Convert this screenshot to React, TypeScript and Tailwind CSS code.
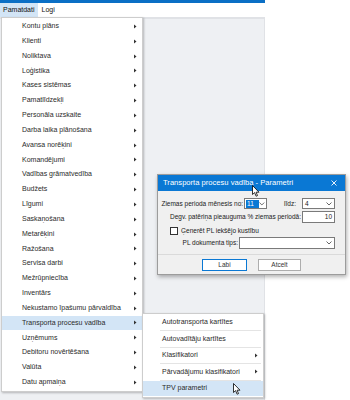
import type { ReactNode } from "react";

const MENU_ITEMS = [
  "Kontu plāns",
  "Klienti",
  "Noliktava",
  "Loģistika",
  "Kases sistēmas",
  "Pamatlīdzekļi",
  "Personāla uzskaite",
  "Darba laika plānošana",
  "Avansa norēķini",
  "Komandējumi",
  "Vadības grāmatvedība",
  "Budžets",
  "Līgumi",
  "Saskaņošana",
  "Metarēķini",
  "Ražošana",
  "Servisa darbi",
  "Mežrūpniecība",
  "Inventārs",
  "Nekustamo īpašumu pārvaldība",
  "Transporta procesu vadība",
  "Uzņēmums",
  "Debitoru novērtēšana",
  "Valūta",
  "Datu apmaiņa",
];

const SUB_ITEMS = [
  { label: "Autotransporta kartītes", arrow: false },
  { label: "Autovadītāju kartītes", arrow: false },
  { label: "Klasifikatori", arrow: true },
  { label: "Pārvadājumu klasifikatori", arrow: true },
  { label: "TPV parametri", arrow: false },
];

function Arrow() {
  return (
    <svg width="3" height="5" viewBox="0 0 3 5" aria-hidden="true">
      <polygon points="0,0.5 2.5,2.5 0,4.5" fill="#333" />
    </svg>
  );
}

function Chevron() {
  return (
    <svg width="6" height="4" viewBox="0 0 6 4" aria-hidden="true">
      <polyline points="0.5,0.5 3,3 5.5,0.5" fill="none" stroke="#555" strokeWidth="0.9" />
    </svg>
  );
}

function Cursor({ className }: { className: string }) {
  return (
    <svg className={className} width="8" height="12" viewBox="0 0 8 12" aria-hidden="true">
      <path
        d="M0.5 0.5 L0.5 9.5 L2.6 7.6 L4.1 11.2 L5.5 10.6 L4.1 7.2 L7 7.2 Z"
        fill="#fff"
        stroke="#000"
        strokeWidth="0.8"
        strokeLinejoin="round"
      />
    </svg>
  );
}

function Field({ className, children }: { className: string; children?: ReactNode }) {
  return (
    <div className={`flex shrink-0 items-center border border-[#7a7a7a] bg-white ${className}`}>
      {children}
    </div>
  );
}

export default function App() {
  return (
    <div className="relative h-[400px] w-[350px] overflow-hidden whitespace-nowrap bg-white font-['Liberation_Sans',Arial,sans-serif] text-[7px] text-[#2b2b2b]">
      <div className="h-[3px] w-[265px] bg-[#0b6fc5]" />
      <nav className="flex h-[14px] items-center text-[#111]">
        <span className="flex h-full items-center bg-[#d3e5f6] px-[3px]">Pamatdati</span>
        <span className="px-[4px]">Logi</span>
      </nav>
      <div className="h-[383px] w-[265px] border-t-2 border-r border-[#e0e2e6] bg-[#eef0f3]" />

      {/* main dropdown */}
      <div className="absolute left-px top-[17px] w-[142px] border border-[#cdcdcd] bg-white py-px shadow-[1px_1px_2px_rgba(0,0,0,0.25)]">
        {MENU_ITEMS.map((item) => (
          <div
            key={item}
            className={`flex h-[14.83px] items-center justify-between pl-[20px] pr-[5px] ${
              item === "Transporta procesu vadība" ? "bg-[#d3e5f6]" : ""
            }`}
          >
            <span>{item}</span>
            <Arrow />
          </div>
        ))}
      </div>

      {/* submenu */}
      <div className="absolute left-[142px] top-[313px] w-[122px] border border-[#cdcdcd] bg-white py-px shadow-[1px_1px_2px_rgba(0,0,0,0.25)]">
        {SUB_ITEMS.map((item, i) => (
          <div key={item.label}>
            {i > 0 && <div className="ml-[17px] mr-[2px] h-px bg-[#e4e4e4]" />}
            <div
              className={`flex h-[15.4px] items-center justify-between pl-[19px] pr-[5px] ${
                item.label === "TPV parametri" ? "bg-[#d3e5f6]" : ""
              }`}
            >
              <span>{item.label}</span>
              {item.arrow && <Arrow />}
            </div>
          </div>
        ))}
      </div>

      {/* dialog */}
      <div className="absolute left-[157px] top-[174px] w-[189px] border border-[#9c9c9c] bg-[#f0f0f0] shadow-[1px_2px_4px_rgba(0,0,0,0.3)]">
        <div className="flex h-[16px] items-center justify-between bg-[#0a78d4] pl-[5px] pr-[8px] text-[7.6px] text-white">
          <span>Transporta procesu vadība - Parametri</span>
          <svg width="6" height="6" viewBox="0 0 6 6" aria-hidden="true">
            <path d="M0.5 0.5 L5.5 5.5 M5.5 0.5 L0.5 5.5" stroke="#fff" strokeWidth="0.9" />
          </svg>
        </div>

        <div className="flex flex-col pr-[10px] pt-[7px] text-[6.5px] text-[#1a1a1a]">
          <div className="flex h-[11px] items-center justify-end">
            <span className="mr-px">Ziemas perioda mēnesis no:</span>
            <Field className="h-[11px] w-[23px] justify-between pl-px pr-[1px]">
              <span className="flex h-[8px] w-[14px] items-center bg-[#0a78d4] pl-px text-white">11</span>
              <Chevron />
            </Field>
            <span className="ml-[17px] mr-[6px]">līdz:</span>
            <Field className="h-[11px] w-[33px] justify-between pl-[2px] pr-[2px]">
              <span>4</span>
              <Chevron />
            </Field>
          </div>

          <div className="mt-[2px] flex h-[12px] items-center justify-end">
            <span className="mr-px">Degv. patēriņa pieauguma % ziemas periodā:</span>
            <Field className="h-[12px] w-[33px] justify-end pr-[2px]">
              <span>10</span>
            </Field>
          </div>

          <div className="mt-[4px] flex h-[8px] items-center pl-[12px]">
            <div className="h-[8px] w-[8px] border border-[#333] bg-white" />
            <span className="ml-[3px]">Ģenerēt PL iekšējo kustību</span>
          </div>

          <div className="mt-[2px] flex h-[12px] items-center justify-end">
            <span className="mr-px">PL dokumenta tips:</span>
            <Field className="h-[12px] w-[96px] justify-end pr-[2px]">
              <Chevron />
            </Field>
          </div>
        </div>

        <div className="mt-[5px] flex h-[20px] items-center justify-center gap-[11px] border-t border-[#dadada] text-[6.5px]">
          <button className="flex h-[12px] w-[45px] items-center justify-center border border-[#0a78d4] bg-white text-[#333]">
            Labi
          </button>
          <button className="flex h-[12px] w-[43px] items-center justify-center border border-[#adadad] bg-white text-[#333]">
            Atcelt
          </button>
        </div>
      </div>

      <Cursor className="absolute left-[252px] top-[185px]" />
      <Cursor className="absolute left-[233px] top-[383px]" />
    </div>
  );
}
